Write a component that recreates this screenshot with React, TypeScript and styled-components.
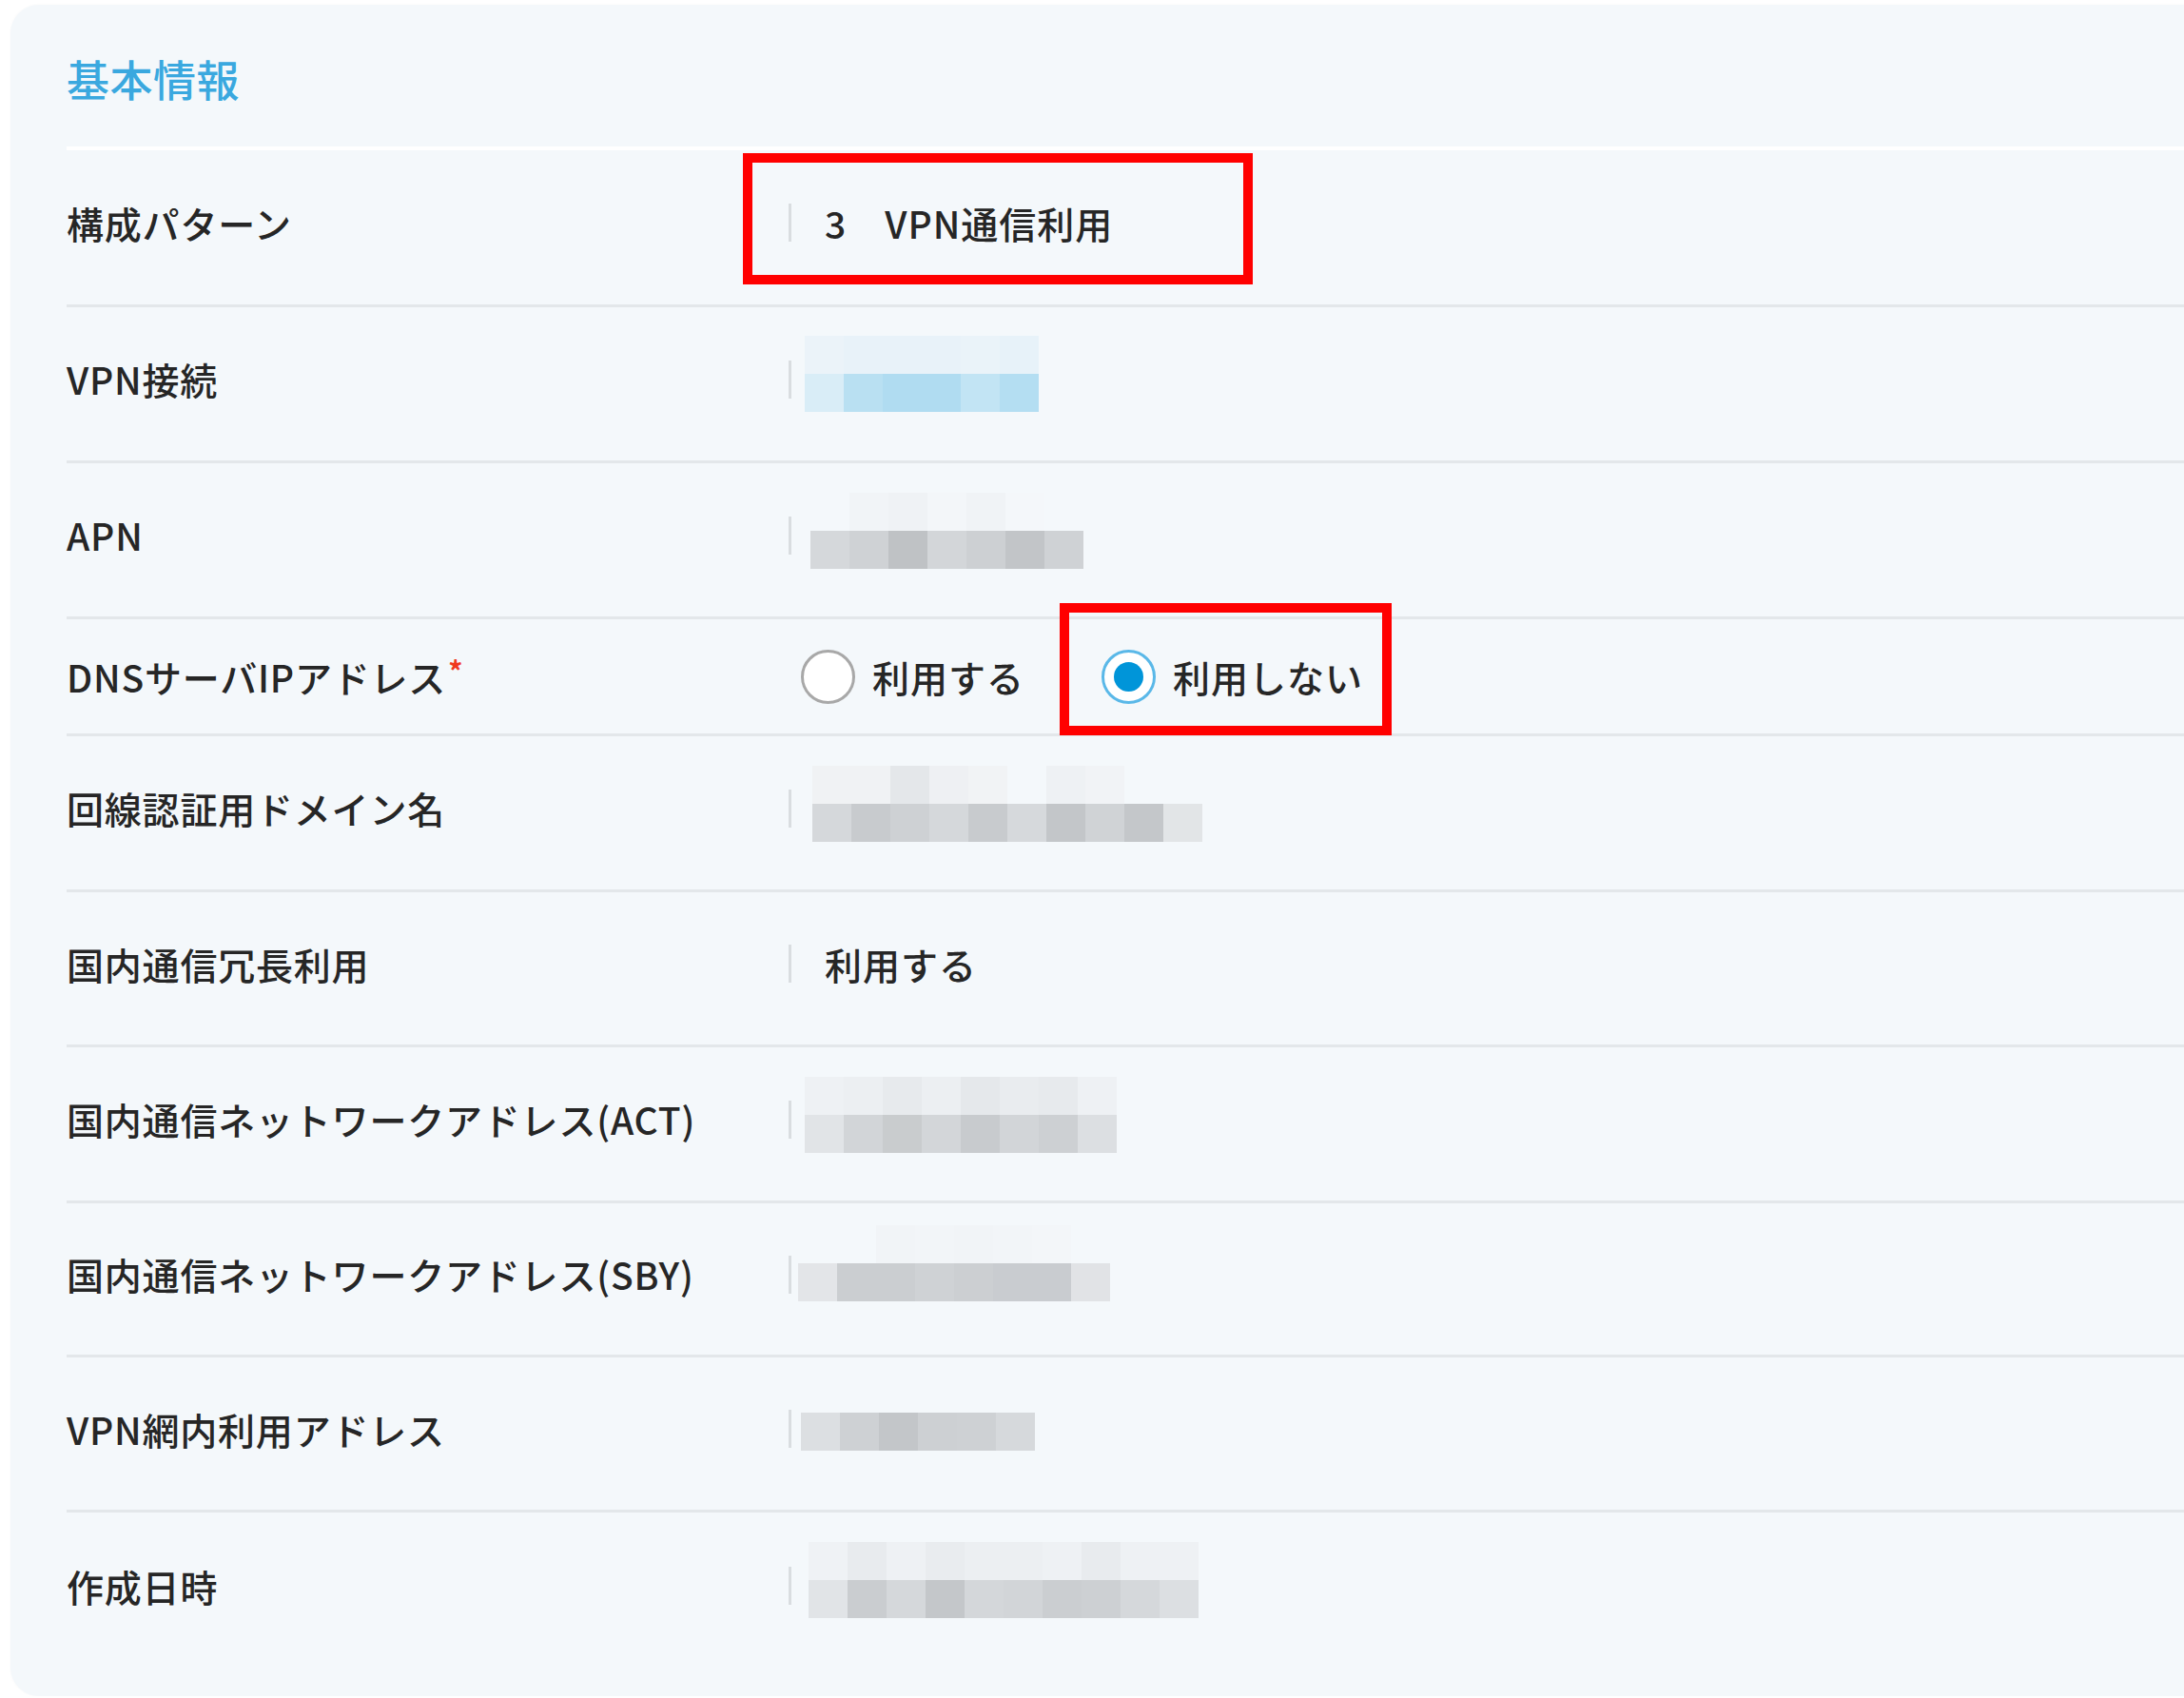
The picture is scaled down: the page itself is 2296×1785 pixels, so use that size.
import React from "react";
import styled, { createGlobalStyle } from "styled-components";

const Global = createGlobalStyle`
  html, body {
    margin: 0;
    padding: 0;
    background: #ffffff;
    overflow: hidden;
  }
  body {
    font-family: "Noto Sans CJK JP", "Noto Sans", sans-serif;
    color: #262626;
  }
`;

const Card = styled.section`
  margin: 5px 0 0 11px;
  width: calc(100% + 40px);
  box-sizing: border-box;
  background: #f4f8fb;
  border-radius: 30px;
  padding: 0 0 29px 59px;
  box-shadow: 0 0 3px rgba(0, 0, 0, 0.03);
`;

const Header = styled.header`
  height: 153px;
  box-sizing: border-box;
  padding-top: 6px;
  display: flex;
  align-items: center;
  border-bottom: 4px solid #ffffff;
`;

const Heading = styled.h2`
  margin: 0;
  font-size: 45px;
  font-weight: 500;
  line-height: 1;
  letter-spacing: 0.5px;
  color: #3aa8df;
`;

const Row = styled.div<{ $h: number; $shift: number; $last?: boolean }>`
  display: grid;
  grid-template-columns: 759px 1fr;
  align-items: center;
  height: ${(p) => p.$h}px;
  box-sizing: border-box;
  padding-bottom: ${(p) => p.$shift}px;
  border-bottom: ${(p) => (p.$last ? "none" : "3px solid #e3e7ea")};
`;

const Label = styled.div`
  font-size: 39px;
  font-weight: 500;
  line-height: 1.2;
  letter-spacing: 0.8px;
  white-space: nowrap;
  color: #262626;
`;

const Required = styled.span`
  color: #f0391e;
  font-size: 30px;
  font-weight: 700;
  vertical-align: top;
  margin-left: 2px;
  line-height: 1;
  position: relative;
  top: 1px;
`;

const Value = styled.div`
  display: flex;
  align-items: center;
`;

const Highlight = styled.div`
  position: relative;
  display: flex;
  align-items: center;
`;

const Annotation = styled.span<{ $top: number; $left: number; $w: number; $h: number }>`
  position: absolute;
  top: ${(p) => p.$top}px;
  left: ${(p) => p.$left}px;
  width: ${(p) => p.$w}px;
  height: ${(p) => p.$h}px;
  border: 10px solid #ff0000;
  box-sizing: border-box;
  pointer-events: none;
`;

const Bar = styled.span`
  flex: none;
  width: 3px;
  height: 40px;
  background: #d9dde0;
`;

const ValueText = styled.span`
  margin-left: 35px;
  font-size: 39px;
  font-weight: 500;
  line-height: 1.2;
  letter-spacing: 1px;
  white-space: nowrap;
  color: #262626;
`;

const Pixels = styled.div<{ $cols: number; $offset: number; $shift: number }>`
  display: grid;
  grid-template-columns: repeat(${(p) => p.$cols}, 41px);
  grid-auto-rows: 40px;
  margin-left: ${(p) => p.$offset}px;
  transform: translateY(${(p) => p.$shift}px);
`;

const Cell = styled.span<{ $c: string }>`
  background: ${(p) => p.$c};
`;

const RadioGroup = styled.div`
  display: flex;
  align-items: center;
  gap: 81px;
  margin-left: 13px;
`;

const Option = styled.label`
  position: relative;
  display: flex;
  align-items: center;
  gap: 18px;
  font-size: 39px;
  font-weight: 500;
  line-height: 1.2;
  letter-spacing: 1px;
  color: #262626;
  white-space: nowrap;
`;

const RadioCircle = styled.span<{ $checked?: boolean }>`
  flex: none;
  width: 57px;
  height: 57px;
  border-radius: 50%;
  box-sizing: border-box;
  border: 3px solid ${(p) => (p.$checked ? "#5ab8e8" : "#a8a8a8")};
  background: #ffffff;
  display: flex;
  align-items: center;
  justify-content: center;

  &::after {
    content: "";
    display: ${(p) => (p.$checked ? "block" : "none")};
    width: 31px;
    height: 31px;
    border-radius: 50%;
    background: #0095d9;
  }
`;

const BG = "#f4f8fb";

type Block = { cols: number; offset: number; shift: number; rows: string[][] };

const blocks: Record<string, Block> = {
  vpn: {
    cols: 6,
    offset: 14,
    shift: -6,
    rows: [
      ["#ebf3f9", "#e8f2f9", "#e8f2f9", "#e8f2f9", "#eaf3f9", "#e7f2f9"],
      ["#d9edf7", "#b9e0f2", "#b0dcf1", "#b0dcf1", "#c2e4f4", "#b4def2"],
    ],
  },
  apn: {
    cols: 7,
    offset: 20,
    shift: -5,
    rows: [
      [BG, "#f1f4f7", "#eff2f5", "#f3f6f9", "#f0f3f6", "#f4f7fa", BG],
      ["#d5d8db", "#cfd2d5", "#bfc2c5", "#d3d6d9", "#cdd0d3", "#c2c5c8", "#cfd2d5"],
    ],
  },
  domain: {
    cols: 10,
    offset: 22,
    shift: -5,
    rows: [
      ["#f0f2f4", "#f0f2f4", "#e4e7ea", "#eef0f3", "#f1f3f5", BG, "#eef1f4", "#f1f3f6", BG, BG],
      ["#d5d8db", "#c8cbce", "#ced1d4", "#d5d8db", "#c8cbce", "#d6d9dc", "#c3c6c9", "#d0d3d6", "#c4c7ca", "#e2e5e7"],
    ],
  },
  act: {
    cols: 8,
    offset: 14,
    shift: -5,
    rows: [
      ["#eef1f4", "#eceff2", "#e7eaed", "#eceff2", "#e5e8eb", "#e9ecef", "#e7eaed", "#eef1f4"],
      ["#e1e4e7", "#d2d5d8", "#c9ccce", "#d3d6d9", "#c8cbce", "#d2d5d8", "#cdd0d3", "#dcdfe2"],
    ],
  },
  sby: {
    cols: 8,
    offset: 7,
    shift: -12,
    rows: [
      [BG, BG, "#f1f4f7", "#f2f5f8", "#f1f4f7", "#f2f5f8", "#f3f6f9", BG],
      ["#e3e5e8", "#cbced1", "#cbced1", "#cfd2d5", "#cccfd2", "#c9ccd0", "#c9ccd0", "#e1e3e6"],
    ],
  },
  inner: {
    cols: 6,
    offset: 10,
    shift: 3,
    rows: [["#dcdfe2", "#ced1d4", "#c3c6c9", "#cdd0d3", "#ced1d4", "#d6d9dc"]],
  },
  created: {
    cols: 10,
    offset: 18,
    shift: -6,
    rows: [
      ["#eff2f5", "#e8ebee", "#eef1f4", "#e9ecef", "#eceff2", "#eceff2", "#eef1f4", "#e8ebee", "#eef1f4", "#eef1f4"],
      ["#e1e4e7", "#cacdd0", "#d5d8db", "#c4c7ca", "#d4d7da", "#d2d5d8", "#cbced1", "#cdd0d3", "#d5d8db", "#dcdfe2"],
    ],
  },
};

const Masked: React.FC<{ id: keyof typeof blocks }> = ({ id }) => {
  const b = blocks[id];
  return (
    <Value>
      <Bar />
      <Pixels $cols={b.cols} $offset={b.offset} $shift={b.shift} aria-hidden>
        {b.rows.flatMap((r, ri) => r.map((c, ci) => <Cell key={`${ri}-${ci}`} $c={c} />))}
      </Pixels>
    </Value>
  );
};

export default function App() {
  return (
    <>
      <Global />
      <Card>
        <Header>
          <Heading>基本情報</Heading>
        </Header>

        <Row $h={165} $shift={10}>
          <Label>構成パターン</Label>
          <Value>
            <Highlight>
              <Bar />
              <ValueText>3　VPN通信利用</ValueText>
              <Annotation $top={-50} $left={-48} $w={536} $h={138} />
            </Highlight>
          </Value>
        </Row>

        <Row $h={164} $shift={10}>
          <Label>VPN接続</Label>
          <Masked id="vpn" />
        </Row>

        <Row $h={164} $shift={10}>
          <Label>APN</Label>
          <Masked id="apn" />
        </Row>

        <Row $h={123} $shift={0}>
          <Label>
            DNSサーバIPアドレス<Required>*</Required>
          </Label>
          <RadioGroup>
            <Option>
              <RadioCircle />
              利用する
            </Option>
            <Option>
              <RadioCircle $checked />
              利用しない
              <Annotation $top={-49} $left={-44} $w={349} $h={139} />
            </Option>
          </RadioGroup>
        </Row>

        <Row $h={164} $shift={10}>
          <Label>回線認証用ドメイン名</Label>
          <Masked id="domain" />
        </Row>

        <Row $h={163} $shift={10}>
          <Label>国内通信冗長利用</Label>
          <Value>
            <Bar />
            <ValueText>利用する</ValueText>
          </Value>
        </Row>

        <Row $h={164} $shift={10}>
          <Label>国内通信ネットワークアドレス(ACT)</Label>
          <Masked id="act" />
        </Row>

        <Row $h={162} $shift={10}>
          <Label>国内通信ネットワークアドレス(SBY)</Label>
          <Masked id="sby" />
        </Row>

        <Row $h={163} $shift={10}>
          <Label>VPN網内利用アドレス</Label>
          <Masked id="inner" />
        </Row>

        <Row $h={164} $shift={10} $last>
          <Label>作成日時</Label>
          <Masked id="created" />
        </Row>
      </Card>
    </>
  );
}
